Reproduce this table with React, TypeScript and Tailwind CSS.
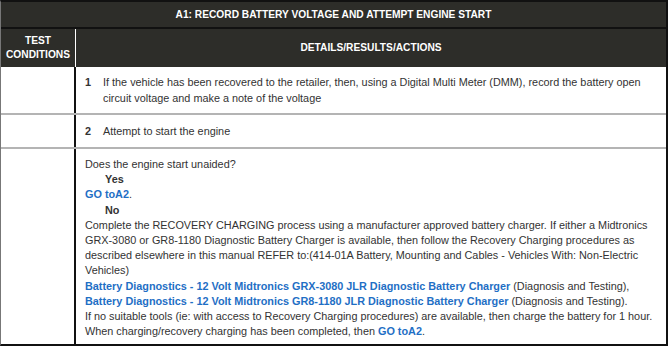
export default function App() {
  const link = "text-[#1f6fc5] font-bold";
  return (
    <div className="w-[668px] h-[349px] bg-white font-['Liberation_Sans',Arial,sans-serif] text-[10.85px] text-[#333]">
      <div className="border-t-2 border-r-2 border-b-2 border-[#111] border-l border-l-[#777]">
        {/* Title */}
        <div className="h-[27px] bg-[#2d2d29] text-white font-bold text-[10.2px] flex items-center justify-center border-b-2 border-[#111]">
          A1: RECORD BATTERY VOLTAGE AND ATTEMPT ENGINE START
        </div>
        {/* Column headers */}
        <div className="flex h-[38px] bg-[#2d2d29] text-white font-bold text-[10.2px]">
          <div className="w-[75px] flex items-center justify-center text-center leading-[14px] border-r border-white">
            TEST
            <br />
            CONDITIONS
          </div>
          <div className="flex-1 flex items-center justify-center">DETAILS/RESULTS/ACTIONS</div>
        </div>
        {/* Row 1 */}
        <div className="flex h-[48px] border-b-2 border-[#b4b4b4]">
          <div className="w-[75px] border-r-2 border-[#111]" />
          <div className="flex-1 flex pl-[9px] pt-[8px] leading-[15.5px]">
            <span className="w-[18px] font-bold">1</span>
            <span className="flex-1 pr-4">
              If the vehicle has been recovered to the retailer, then, using a Digital Multi Meter (DMM), record the battery open circuit voltage and make a note of the voltage
            </span>
          </div>
        </div>
        {/* Row 2 */}
        <div className="flex h-[34px] border-b-2 border-[#b4b4b4]">
          <div className="w-[75px] border-r-2 border-[#111]" />
          <div className="flex-1 flex items-center pl-[9px]">
            <span className="w-[18px] font-bold">2</span>
            <span>Attempt to start the engine</span>
          </div>
        </div>
        {/* Row 3 */}
        <div className="flex h-[195px]">
          <div className="w-[75px] border-r-2 border-[#111]" />
          <div className="flex-1 pl-[9px] pr-[6px] pt-[8px] leading-[15.2px]">
            <div>Does the engine start unaided?</div>
            <div className="pl-[20px] font-bold">Yes</div>
            <div>
              <span className={link}>GO toA2</span>.
            </div>
            <div className="pl-[20px] font-bold">No</div>
            <div>
              Complete the RECOVERY CHARGING process using a manufacturer approved battery charger. If either a Midtronics GRX-3080 or GR8-1180 Diagnostic Battery Charger is available, then follow the Recovery Charging procedures as described elsewhere in this manual REFER to:(414-01A Battery, Mounting and Cables - Vehicles With: Non-Electric Vehicles)
            </div>
            <div>
              <span className={link}>Battery Diagnostics - 12 Volt Midtronics GRX-3080 JLR Diagnostic Battery Charger</span> (Diagnosis and Testing),
            </div>
            <div>
              <span className={link}>Battery Diagnostics - 12 Volt Midtronics GR8-1180 JLR Diagnostic Battery Charger</span> (Diagnosis and Testing).
            </div>
            <div>
              If no suitable tools (ie: with access to Recovery Charging procedures) are available, then charge the battery for 1 hour. When charging/recovery charging has been completed, then <span className={link}>GO toA2</span>.
            </div>
          </div>
        </div>
      </div>
    </div>
  );
}
